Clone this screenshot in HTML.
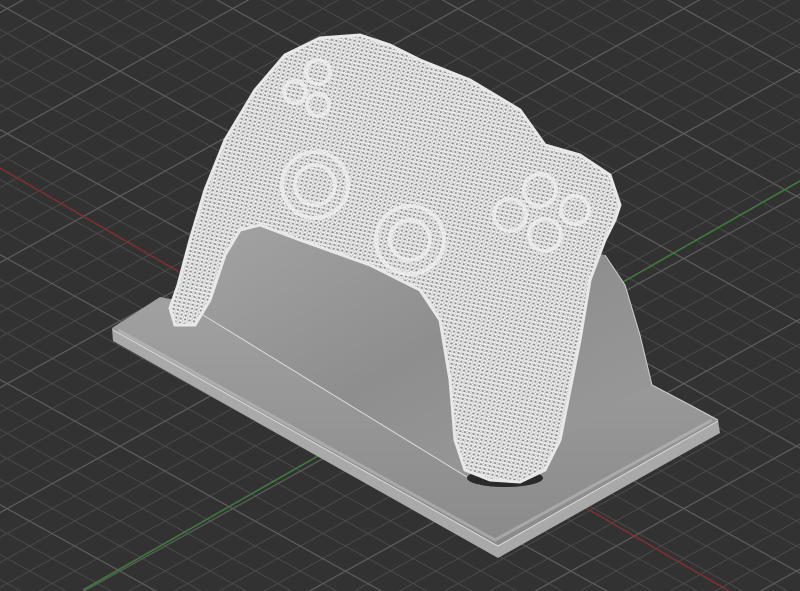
<!DOCTYPE html>
<html><head><meta charset="utf-8"><style>
html,body{margin:0;padding:0;background:#323232;overflow:hidden;width:800px;height:591px;}
svg{display:block;}
</style></head><body>
<svg width="800" height="591" viewBox="0 0 800 591" xmlns="http://www.w3.org/2000/svg">
<defs>
<pattern id="ga" width="800" height="25" patternUnits="userSpaceOnUse" patternTransform="skewY(29) translate(0,4)">
<rect x="0" y="0" width="800" height="1" fill="#4c4c4c"/></pattern>
<pattern id="gb" width="800" height="25" patternUnits="userSpaceOnUse" patternTransform="skewY(-29) translate(0,12)">
<rect x="0" y="0" width="800" height="1" fill="#4c4c4c"/></pattern>
<pattern id="ma" width="800" height="125" patternUnits="userSpaceOnUse" patternTransform="skewY(29) translate(0,4)">
<rect x="0" y="0" width="800" height="1.3" fill="#5e5e5e"/></pattern>
<pattern id="mb" width="800" height="125" patternUnits="userSpaceOnUse" patternTransform="skewY(-29) translate(0,12)">
<rect x="0" y="0" width="800" height="1.3" fill="#5e5e5e"/></pattern>
<pattern id="mesh" width="9" height="8" patternUnits="userSpaceOnUse" patternTransform="rotate(12)">
<rect width="9" height="8" fill="#8c8c8c"/>
<path d="M0 0H9M0 4H9M0 8H9M0 0L4.5 4L9 0M0 8L4.5 4L9 8M0 4L4.5 8M4.5 0L9 4M0 4L4.5 0M4.5 8L9 4" stroke="#eeeeee" stroke-width="1.1" fill="none"/>
</pattern>
<linearGradient id="riser" x1="0" y1="0" x2="1" y2="1">
<stop offset="0" stop-color="#a4a4a4"/><stop offset="0.5" stop-color="#8e8e8e"/><stop offset="1" stop-color="#9c9c9c"/></linearGradient>
<linearGradient id="basetop" x1="0" y1="0" x2="0" y2="1">
<stop offset="0" stop-color="#a8a8a8"/><stop offset="1" stop-color="#8a8a8a"/></linearGradient>
</defs>
<rect width="800" height="591" fill="#323232"/>
<rect width="800" height="591" fill="url(#ga)"/>
<rect width="800" height="591" fill="url(#gb)"/>
<rect width="800" height="591" fill="url(#ma)"/>
<rect width="800" height="591" fill="url(#mb)"/>
<line x1="0" y1="168" x2="729" y2="591" stroke="#7a3030" stroke-width="1.6"/>
<line x1="83" y1="590" x2="800" y2="181" stroke="#3f7a3a" stroke-width="1.6"/>
<polygon points="112,328 498,545 718,420 720,433 498,558 113,341" fill="#a9a9a9"/>
<polyline points="113,330 498,546 718,421" fill="none" stroke="#d8d8d8" stroke-width="1"/>
<polygon points="112,328 160,297 185,302 190,245 205,226 255,218 605,255 625,285 640,335 652,385 690,405 718,420 498,545" fill="url(#basetop)"/>
<polygon points="190,307 190,245 205,226 255,218 605,255 625,285 640,335 652,385 480,485" fill="url(#riser)"/>
<polyline points="190,307 480,485" stroke="#dcdcdc" stroke-width="1" fill="none"/>
<polyline points="605,255 625,285 640,335 652,385 690,405 718,420" stroke="#cfcfcf" stroke-width="1" fill="none"/>
<polyline points="118,330 495,540 712,420" stroke="#c4c4c4" stroke-width="3" fill="none" opacity="0.5"/>
<ellipse cx="505" cy="478" rx="38" ry="9" fill="#2a2a2a"/>
<path d="M170,308 L178,285 190,240 205,190 225,140 255,90 285,55 320,38 360,35 390,45 420,60 470,80 520,110 545,145 580,155 610,175 620,205 615,220 605,240 590,280 580,340 570,390 560,440 545,470 520,482 490,480 465,470 455,440 450,380 440,320 420,290 370,265 300,240 260,225 240,230 225,255 210,300 195,325 175,325 Z" fill="url(#mesh)" stroke="#e8e8e8" stroke-width="3"/>
<g fill="none" stroke="#f0f0f0" stroke-width="4" opacity="0.8">
<circle cx="315" cy="185" r="33"/><circle cx="315" cy="185" r="20"/>
<circle cx="410" cy="240" r="34"/><circle cx="410" cy="240" r="20"/>
<circle cx="540" cy="190" r="16"/><circle cx="510" cy="215" r="16"/><circle cx="545" cy="235" r="16"/><circle cx="575" cy="210" r="14"/>
<circle cx="318" cy="72" r="12"/><circle cx="295" cy="92" r="11"/><circle cx="318" cy="105" r="11"/>
</g>
</svg>
</body></html>
